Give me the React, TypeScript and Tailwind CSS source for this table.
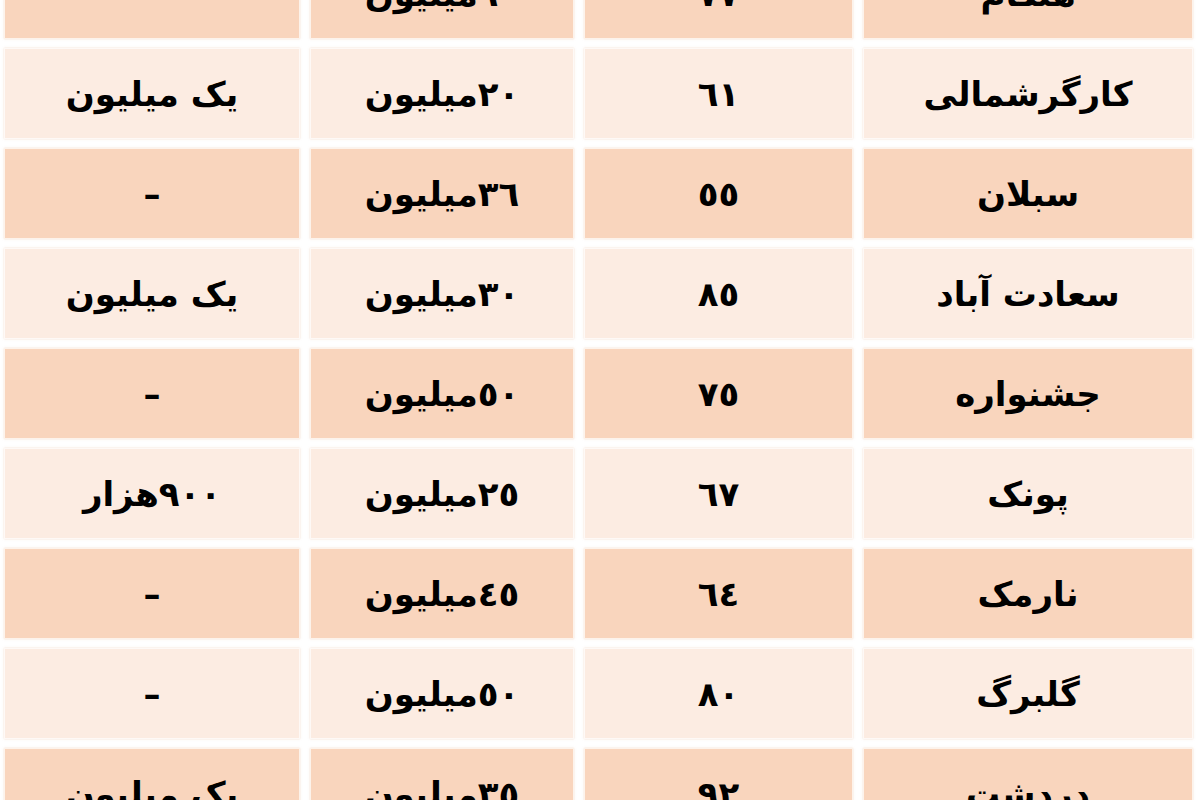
const rows = [
  { area: "هنگام", age: "٧٧", price: "٦٠میلیون", rent: "–" },
  { area: "کارگرشمالی", age: "٦١", price: "٢٠میلیون", rent: "یک میلیون" },
  { area: "سبلان", age: "٥٥", price: "٣٦میلیون", rent: "–" },
  { area: "سعادت آباد", age: "٨٥", price: "٣٠میلیون", rent: "یک میلیون" },
  { area: "جشنواره", age: "٧٥", price: "٥٠میلیون", rent: "–" },
  { area: "پونک", age: "٦٧", price: "٢٥میلیون", rent: "٩٠٠هزار" },
  { area: "نارمک", age: "٦٤", price: "٤٥میلیون", rent: "–" },
  { area: "گلبرگ", age: "٨٠", price: "٥٠میلیون", rent: "–" },
  { area: "دردشت", age: "٩٢", price: "٣٥میلیون", rent: "یک میلیون" },
];

function Cell({ text, dark }: { text: string; dark: boolean }) {
  return (
    <div
      className={`flex h-[91px] items-center justify-center border border-white/70 pt-[2px] text-[34px] font-bold text-black shadow-[0_0_2px_rgba(230,190,160,0.5)] ${
        dark ? "bg-[#f9d5bd]" : "bg-[#fcece2]"
      }`}
    >
      {text}
    </div>
  );
}

export default function App() {
  return (
    <div className="h-[800px] w-[1200px] overflow-hidden bg-white">
      {/* price table, first row scrolled partly out of view */}
      <div
        dir="rtl"
        className="-mt-[52px] grid grid-cols-[330px_269px_264px_296px] gap-x-[10px] gap-y-[9px] pl-[4px] pr-[7px] font-['DejaVu_Sans',sans-serif]"
      >
        {rows.map((r, i) => {
          const dark = i % 2 === 0;
          return [
            <Cell key={`${i}-a`} text={r.area} dark={dark} />,
            <Cell key={`${i}-b`} text={r.age} dark={dark} />,
            <Cell key={`${i}-c`} text={r.price} dark={dark} />,
            <Cell key={`${i}-d`} text={r.rent} dark={dark} />,
          ];
        })}
      </div>
    </div>
  );
}
